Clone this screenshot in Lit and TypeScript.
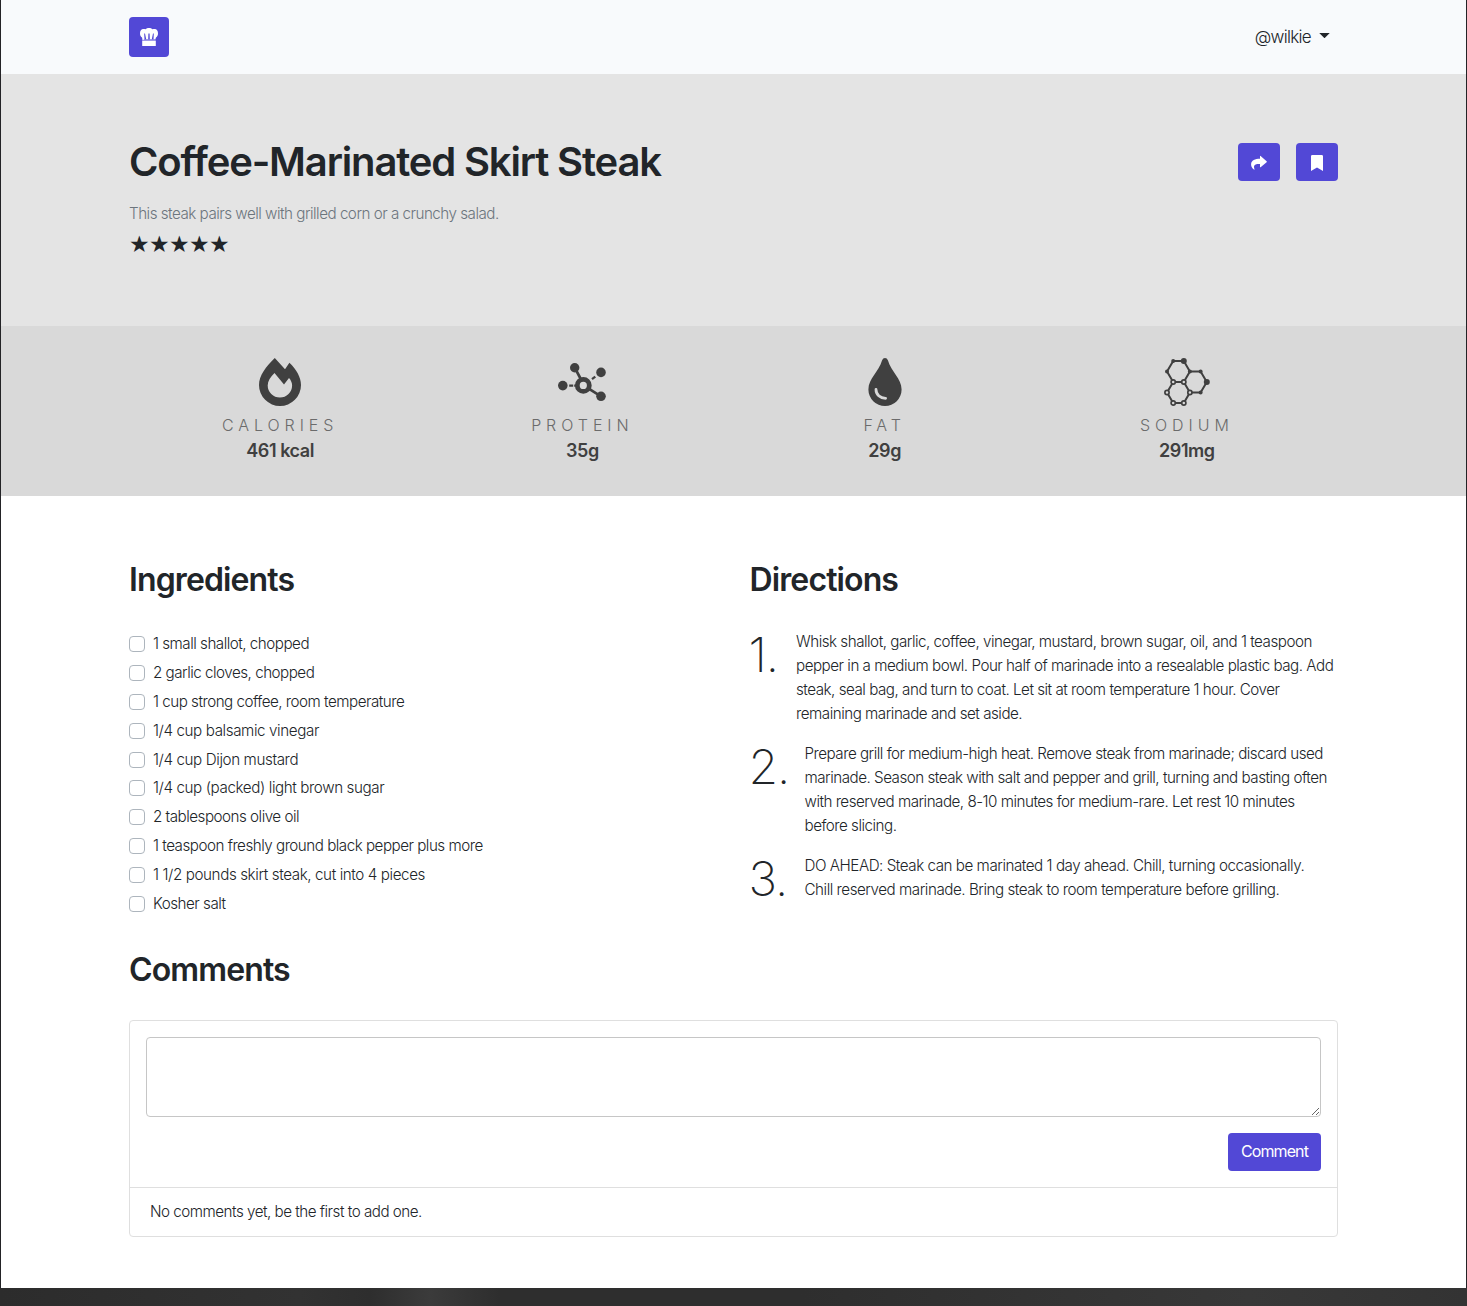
import { LitElement, html, css, svg } from "lit";
import { customElement, state } from "lit/decorators.js";
import { classMap } from "lit/directives/class-map.js";

const hatIcon = svg`<svg class="hat" viewBox="0 0 20 20" width="20" height="20" fill="#fff">
  <path d="M3.6 13.2 L3 10.5 C1.6 9.5 1 8.2 1 6.2 C1 3.8 2.3 2 4.3 2 C5.2 2 5.9 2.2 6.6 2.3 C7.3 1.5 8.6 1 10 1 C11.4 1 12.7 1.5 13.4 2.3 C14.1 2.2 14.8 2 15.7 2 C17.7 2 19 3.8 19 6.2 C19 8.2 18.4 9.5 17 10.5 L16.4 12.3 L14.5 12.3 L14.8 6.6 L14 6.6 L12.8 12.3 L10.8 12.3 L10.6 6.4 L9.4 6.4 L9.2 12.3 L7.2 12.3 L6 6.6 L5.2 6.6 L5.5 12.3 Z"/>
  <path d="M3.4 12.4h13.2v1.1H3.4z" opacity=".45"/>
  <path d="M3.2 13.7h13.6V19H3.2z"/>
</svg>`;

const shareIcon = svg`<svg class="glyph" viewBox="0 0 16 16" width="16" height="16" fill="#fff">
  <path d="M9 1.3 Q9 .6 9.6 1 L15.6 6.200 Q16.1 6.700 15.6 7.200 L9.6 12.200 Q9 12.600 9 11.900 L9 9.100 C5.6 9 3.4 9.500 3 11.400 C2.9 12.400 3.2 13.300 3.5 14.200 Q3.6 14.900 2.9 14.500 C1.1 13.200 0 11.500 .1 9.300 C.3 5.200 4 3.900 9 3.800 Z"/>
</svg>`;

const bookmarkIcon = svg`<svg class="glyph" viewBox="0 0 16 16" width="16" height="16" fill="#fff">
  <path d="M2 1.3 Q2 0 3.3 0 H12.7 Q14 0 14 1.3 V16 L8 12.6 L2 16 Z"/>
</svg>`;

const flameIcon = svg`<svg viewBox="0 0 42 48" width="42" height="48" fill="#404040">
  <path fill-rule="evenodd" d="M15.8 0 L26 11.2 L30.4 4.8 C37.5 11.5 42 19.5 42 27 A21 21 0 0 1 0 27 C0 17.5 7 8.5 15.8 0 Z M15.5 15 C11.5 19 8.7 23 8.7 27.4 A12.2 12 0 0 0 33.1 27.4 C33.1 24.6 31.8 22 30 20 L25 26.5 Z"/>
</svg>`;

const moleculeIcon = svg`<svg viewBox="0 0 48 48" width="48" height="48" fill="#404040">
  <g stroke="#404040" stroke-width="2.7" fill="none">
    <path d="M16.7 9.7 L22.5 20.5 M31.5 31.2 L43 38.3"/>
    <path d="M11.2 27.6h4M16.2 27.6h1.2M30.3 24l1-.8M34 21.2l3.3-2.6" stroke-width="2.2"/>
    <circle cx="25.3" cy="27.4" r="6" stroke-width="4.8"/>
  </g>
  <circle cx="16.7" cy="9.7" r="4.7"/><circle cx="43" cy="14.4" r="4.8"/>
  <circle cx="43" cy="38.3" r="4.8"/><circle cx="4.8" cy="27.6" r="4.8"/>
</svg>`;

const dropIcon = svg`<svg viewBox="0 0 34 48" width="34" height="48" fill="#404040">
  <path d="M14.1 2.2 Q15 0 17 0 Q19 0 19.9 2.2 C23.3 14 33.600 20.500 33.600 31.500 A16.600 16.500 0 0 1 .4 31.500 C.4 20.500 10.700 14 14.100 2.200 Z"/>
  <path d="M8 31.400 C8 36.500 12 40.300 17.600 40.300" fill="none" stroke="#d9d9d9" stroke-width="2.800" stroke-linecap="round"/>
</svg>`;

const dot = (x: number, y: number, r: number) => svg`<circle cx=${x} cy=${y} r=${r} fill="#404040"/>`;
const ring = (x: number, y: number) =>
  svg`<circle cx=${x} cy=${y} r="2.1" fill="#d9d9d9" stroke="#404040" stroke-width="1.7"/>`;

const latticeIcon = svg`<svg viewBox="0.6 0 48 48" width="48" height="48">
  <path fill="none" stroke="#404040" stroke-width="2" d="M10.8 3H21.400L27.500 13.400L21.400 24H10.800L4.600 13.400Z M27.500 13.400H38.200L44.400 24L38.200 34.500H27.500L21.400 24 M27.500 34.500L21.400 45H10.800L4.600 34.500L10.800 24"/>
  ${dot(10.8, 3, 2)}${dot(21.4, 3, 3)}${dot(4.6, 13.4, 2)}${dot(27.5, 13.4, 2)}${dot(38.2, 13.4, 2)}
  ${dot(44.4, 24, 3)}${dot(38.2, 34.5, 2)}
  ${ring(10.8, 24)}${ring(21.4, 24)}${ring(4.6, 34.5)}${ring(27.5, 34.5)}${ring(10.8, 45)}${ring(21.4, 45)}
</svg>`;

@customElement("app-root")
export class AppRoot extends LitElement {
  @state() private nutrition = [
    { label: "CALORIES", value: "461 kcal", icon: flameIcon },
    { label: "PROTEIN", value: "35g", icon: moleculeIcon },
    { label: "FAT", value: "29g", icon: dropIcon },
    { label: "SODIUM", value: "291mg", icon: latticeIcon },
  ];

  @state() private ingredients = [
    "1 small shallot, chopped",
    "2 garlic cloves, chopped",
    "1 cup strong coffee, room temperature",
    "1/4 cup balsamic vinegar",
    "1/4 cup Dijon mustard",
    "1/4 cup (packed) light brown sugar",
    "2 tablespoons olive oil",
    "1 teaspoon freshly ground black pepper plus more",
    "1 1/2 pounds skirt steak, cut into 4 pieces",
    "Kosher salt",
  ];

  @state() private steps = [
    "Whisk shallot, garlic, coffee, vinegar, mustard, brown sugar, oil, and 1 teaspoon pepper in a medium bowl. Pour half of marinade into a resealable plastic bag. Add steak, seal bag, and turn to coat. Let sit at room temperature 1 hour. Cover remaining marinade and set aside.",
    "Prepare grill for medium-high heat. Remove steak from marinade; discard used marinade. Season steak with salt and pepper and grill, turning and basting often with reserved marinade, 8-10 minutes for medium-rare. Let rest 10 minutes before slicing.",
    "DO AHEAD: Steak can be marinated 1 day ahead. Chill, turning occasionally. Chill reserved marinade. Bring steak to room temperature before grilling.",
  ];

  static styles = css`
    :host {
      display: block;
      box-sizing: border-box;
      height: 1306px;
      background: linear-gradient(90deg, #2c2c2c 0, #323232 300px, #2e2e2e 370px, #3b3b3b 430px, #2e2e2e 500px, #2e2e2e 800px, #383838 1250px, #333 100%);
      padding: 0 1px 18px;
      font-family: Inter, "Liberation Sans", sans-serif;
      font-size: 15.2px;
      font-weight: 300;
      line-height: 24px;
      letter-spacing: -0.5px;
      color: #212529;
    }
    * { box-sizing: border-box; }
    svg { display: block; }
    h1, h2, p, ul, ol { margin: 0; padding: 0; }
    .page { height: 1288px; background: #fff; box-shadow: -1px 0 #232326, 1px 0 #232326; }
    .wrap { padding: 0 128px; }
    .top { height: 74px; background: #f8fafc; display: flex; justify-content: space-between; align-items: center; }
    .logo { width: 40px; height: 40px; border-radius: 4px; background: #5248d6; display: flex; align-items: center; justify-content: center; }
    .user { display: flex; align-items: center; gap: 8px; padding-right: 8px; font-size: 17px; letter-spacing: -0.7px; }
    .caret { width: 11px; height: 5.500px; background: #212529; clip-path: polygon(0 0, 100% 0, 50% 100%); margin-bottom: 3px; }
    .hero { height: 252px; background: #e4e4e4; padding-top: 64px; display: flex; justify-content: space-between; }
    h1 { font-size: 40px; height: 48px; line-height: 48px; font-weight: 600; letter-spacing: -1.160px; }
    .lead { color: #6c757d; margin-top: 16px; }
    .stars { font-family: "DejaVu Sans", sans-serif; font-size: 22.500px; letter-spacing: -0.900px; line-height: 30px; margin-top: 3px; }
    .actions { display: flex; gap: 16px; padding-top: 5px; }
    .btn { border: 0; border-radius: 4px; background: #5248d6; color: #fff; height: 38px; display: flex; align-items: center; justify-content: center; font: 400 16px/24px Inter, sans-serif; letter-spacing: -0.9px; padding: 0 13px 1px; }
    .glyph { margin-top: 2px; }
    .stats { height: 170px; background: #d9d9d9; display: grid; grid-template-columns: repeat(4, 1fr); padding-top: 32px; color: #404040; }
    .stat { display: flex; flex-direction: column; align-items: center; }
    .label { color: #6b6b6b; font-size: 16px; letter-spacing: 4.950px; margin-top: 7px; }
    .value { font-size: 18px; font-weight: 600; line-height: 27px; letter-spacing: -0.45px; }
    .main { display: grid; grid-template-columns: 1fr 1fr; column-gap: 32px; padding-top: 64px; }
    h2 { font-size: 32px; height: 38.400px; line-height: 40px; font-weight: 600; letter-spacing: -0.880px; }
    .list { list-style: none; margin: 32px 0 -0.6px; padding-top: 0.6px; }
    .item { display: flex; align-items: center; gap: 8px; height: 28.800px; padding-bottom: 2px; white-space: nowrap; }
    .fraction { letter-spacing: -0.4px; }
    .check { appearance: none; width: 16px; height: 16px; border: 1px solid #adb5bd; border-radius: 4px; background: #fff; margin: 0; }
    .steps { list-style: none; margin-top: 32px; display: grid; gap: 16px; padding-right: 4px; }
    .step { display: flex; gap: 16px; }
    .step:first-child, .step:last-child { letter-spacing: -0.470px; }
    .step:first-child { margin-right: -4px; letter-spacing: -0.490px; }
    .num { flex: none; width: 40px; margin-left: -1px; font-size: 48px; line-height: 49px; height: 48px; font-weight: 200; letter-spacing: -1.060px; }
    .step:first-child .num { width: 31.500px; }
    .comments { padding-top: 32px; }
    .card { margin-top: 31px; border: 1px solid #dfdfdf; border-radius: 4px; }
    .form { padding: 16px; display: flex; flex-direction: column; align-items: flex-end; gap: 16px; border-bottom: 1px solid #dfdfdf; }
    .field { display: block; width: 100%; height: 80px; border: 1px solid #c6c6c6; border-radius: 4px; background: #fff; resize: vertical; margin: 0; }
    .empty { padding: 12px 20px; height: 48px; }
  `;

  render() {
    return html`<div class="page">
      <header class="top wrap">
        <div class="logo">${hatIcon}</div>
        <div class="user"><span>@wilkie</span><span class="caret"></span></div>
      </header>
      <section class="hero wrap">
        <div>
          <h1>Coffee-Marinated Skirt Steak</h1>
          <p class="lead">This steak pairs well with grilled corn or a crunchy salad.</p>
          <div class="stars">★★★★★</div>
        </div>
        <div class="actions">
          <button class="btn">${shareIcon}</button>
          <button class="btn">${bookmarkIcon}</button>
        </div>
      </section>
      <section class="stats wrap">
        ${this.nutrition.map((n) => html`<div class="stat">
          ${n.icon}
          <div class="label">${n.label}</div>
          <div class="value">${n.value}</div>
        </div>`)}
      </section>
      <section class="main wrap">
        <div>
          <h2>Ingredients</h2>
          <ul class="list">
            ${this.ingredients.map((i) => html`<li>
              <label class=${classMap({ item: true, fraction: i.includes("/") })}><input class="check" type="checkbox" /><span>${i}</span></label>
            </li>`)}
          </ul>
        </div>
        <div>
          <h2>Directions</h2>
          <ol class="steps">
            ${this.steps.map((s, i) => html`<li class="step"><span class="num">${i + 1}.</span><p>${s}</p></li>`)}
          </ol>
        </div>
      </section>
      <section class="comments wrap">
        <h2>Comments</h2>
        <div class="card">
          <div class="form">
            <textarea class="field"></textarea>
            <button class="btn">Comment</button>
          </div>
          <div class="empty">No comments yet, be the first to add one.</div>
        </div>
      </section>
    </div>`;
  }
}
